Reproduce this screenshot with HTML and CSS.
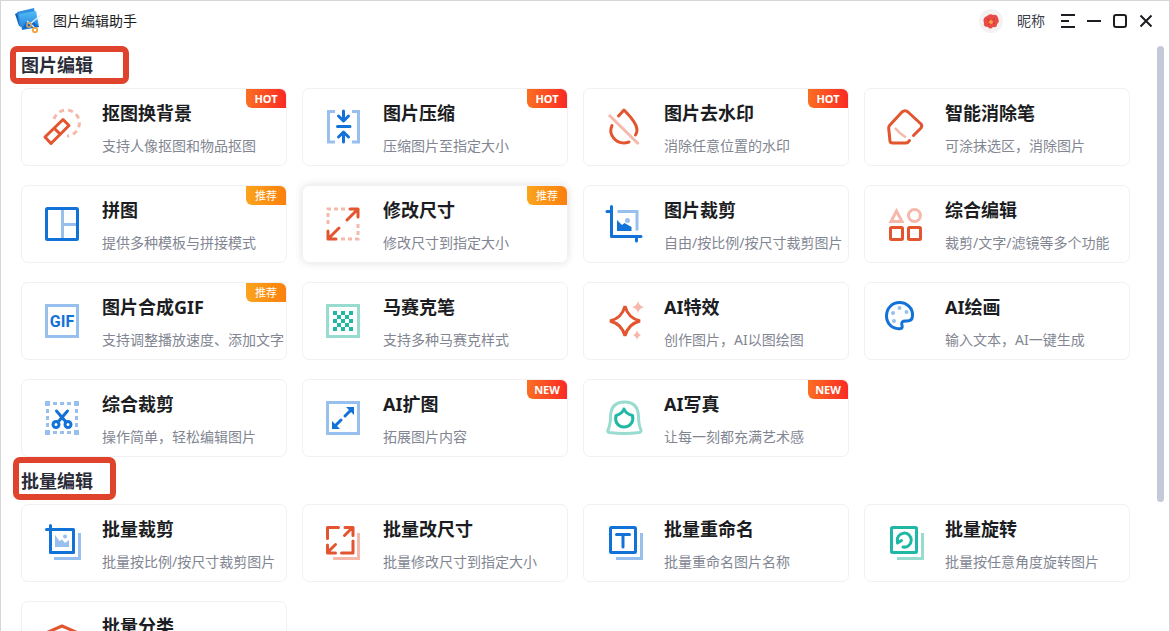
FILE: index.html
```html
<!DOCTYPE html>
<html lang="zh-CN">
<head>
  <meta charset="UTF-8">
  <meta name="viewport" content="width=device-width, initial-scale=1">
  <title>图片编辑助手</title>
  <link rel="stylesheet" href="styles.css">
</head>
<body>
  <div class="app">
    <header class="titlebar">
      <svg class="logo" viewBox="0 0 28 28" aria-hidden="true">
        <defs>
          <linearGradient id="photo" x1="0" y1="0" x2="0" y2="1">
            <stop offset="0" stop-color="#55bdf5"/>
            <stop offset="1" stop-color="#1c7cdc"/>
          </linearGradient>
        </defs>
        <path fill="#1462b0" d="M1 7 L5 5 L8 18 L5 19z"/>
        <path fill="#2f8fe0" d="M3 5 L20 1 L23 17 L6 20z"/>
        <path fill="url(#photo)" d="M5 7 L22 4 L25 20 L8 23z"/>
        <path fill="#1268c8" d="M8 22 L12 15 L16 18 L20 15 L25 20z"/>
        <path stroke="#d9efff" stroke-width="1.5" d="M27 8 L16 17 M13 14 L20 20"/>
        <circle cx="15" cy="18" r="2.2" fill="none" stroke="#d9a35a" stroke-width="1.5"/>
        <circle cx="21" cy="23" r="2.2" fill="none" stroke="#f2a23c" stroke-width="1.8"/>
      </svg>
      <h1 class="app-name">图片编辑助手</h1>
      <a class="user" href="#">
        <svg class="avatar" viewBox="0 0 24 24" aria-hidden="true">
          <circle cx="12" cy="12" r="12" fill="#f3f1f1"/>
          <path fill="#ea4a45" d="M8 7 Q11 4 14 6 Q18 5 19 9 Q21 13 18 15 Q18 19 14 18 Q11 21 9 18 Q4 18 5 14 Q3 9 8 7z"/>
          <path fill="none" stroke="#c92f3a" d="M8 10 L11 12 M16 9 L13 12 M9 16 L11 14 M16 15 L13 13"/>
          <circle cx="12" cy="13" r="2" fill="#f7a13c"/>
        </svg>
        <span>昵称</span>
      </a>
      <div class="window-buttons">
        <button type="button" aria-label="菜单"><svg viewBox="0 0 14 14"><path d="M0 1H14M0 7H8M0 13H14"/></svg></button>
        <button type="button" aria-label="最小化"><svg viewBox="0 0 14 14"><path d="M0 7H14"/></svg></button>
        <button type="button" aria-label="最大化"><svg viewBox="0 0 14 14"><rect x="1" y="1" width="12" height="12" rx="2"/></svg></button>
        <button type="button" aria-label="关闭"><svg viewBox="0 0 14 14"><path d="M1.5 1.5L12.5 12.5M12.5 1.5L1.5 12.5"/></svg></button>
      </div>
    </header>

    <main class="main">
      <div class="tools">
        <section>
          <h2 class="section-title">图片编辑<span class="mark mark-edit"></span></h2>
          <div class="grid">
            <a class="card" href="#">
              <svg class="icon red" viewBox="0 0 40 40"><path class="light" stroke-dasharray="5 4" d="M12 12A13 13 0 1 1 25 29"/><path d="M3 30L21 12.5L27 18.5L9 36.5zM12.5 21.5L18 27"/></svg>
              <div><h3>抠图换背景</h3><p>支持人像抠图和物品抠图</p></div>
              <span class="badge hot">HOT</span>
            </a>
            <a class="card" href="#">
              <svg class="icon blue" viewBox="0 0 40 40"><path class="light" d="M12 4.5H5.5V35H12M29 4.5H35.5V35H29"/><path d="M14.5 19.5H27M20.5 4V13M15.5 9L20.5 14L25.5 9M20.5 35V26M15.5 30L20.5 25L25.5 30"/></svg>
              <div><h3>图片压缩</h3><p>压缩图片至指定大小</p></div>
              <span class="badge hot">HOT</span>
            </a>
            <a class="card" href="#">
              <svg class="icon red" viewBox="0 0 40 40"><path d="M14.5 9L20 3C26 9 33 17 33 23C33 25 32.5 26.5 31.5 28M8 18.5C4 27 11 36 20 36C22 36 23.5 35.5 25 35"/><path class="light" d="M5 8L34.5 37"/></svg>
              <div><h3>图片去水印</h3><p>消除任意位置的水印</p></div>
              <span class="badge hot">HOT</span>
            </a>
            <a class="card" href="#">
              <svg class="icon red" viewBox="0 0 40 40"><path class="light" stroke-width="2.5" d="M10 21Q15 27 21 30.5"/><path d="M28.5 28.5L36 21Q37.5 19 36 17L23 5Q20 2.5 17 5L4.5 18.5Q3.5 20 3.7 21.5L5 34Q5.3 36 7.5 36H21Q23 36 24.5 33.5"/></svg>
              <div><h3>智能消除笔</h3><p>可涂抹选区，消除图片</p></div>
            </a>
            <a class="card" href="#">
              <svg class="icon blue" viewBox="0 0 40 40"><path class="light" d="M20.5 5V35M20.5 20.5H35"/><rect x="4.5" y="4.5" width="31" height="31" rx="1"/></svg>
              <div><h3>拼图</h3><p>提供多种模板与拼接模式</p></div>
              <span class="badge tip">推荐</span>
            </a>
            <a class="card active" href="#">
              <svg class="icon red" viewBox="0 0 40 40"><path class="light" stroke-dasharray="4 3" d="M22 5H5V22M18 35H35V18"/><path d="M24 16L35 5M27 5H35V13M16 24L5 35M5 27V35H13"/></svg>
              <div><h3>修改尺寸</h3><p>修改尺寸到指定大小</p></div>
              <span class="badge tip">推荐</span>
            </a>
            <a class="card" href="#">
              <svg class="icon blue" viewBox="0 0 40 40"><path class="light" d="M13.5 7.5H33V26.5"/><path d="M7.5 2.5V32.5H37M3 7.5H7M32.5 33V37"/><path class="solid" d="M13 16L18 21L20.5 19L27.5 23V27H13z"/><circle class="solid-light" cx="23.5" cy="16.5" r="2.5"/></svg>
              <div><h3>图片裁剪</h3><p>自由/按比例/按尺寸裁剪图片</p></div>
            </a>
            <a class="card" href="#">
              <svg class="icon red" viewBox="0 0 40 40"><path class="light" d="M11.5 7L6 17.5H17z"/><circle class="light" cx="29.5" cy="11.5" r="6"/><rect x="5.5" y="23.5" width="12" height="12" rx="1"/><rect x="23.5" y="23.5" width="12" height="12" rx="1"/></svg>
              <div><h3>综合编辑</h3><p>裁剪/文字/滤镜等多个功能</p></div>
            </a>
            <a class="card" href="#">
              <svg class="icon blue" viewBox="0 0 40 40"><rect class="light" x="4.5" y="4.5" width="31" height="31"/><text x="20" y="26" text-anchor="middle">GIF</text></svg>
              <div><h3>图片合成GIF</h3><p>支持调整播放速度、添加文字</p></div>
              <span class="badge tip">推荐</span>
            </a>
            <a class="card" href="#">
              <svg class="icon green" viewBox="0 0 40 40"><rect class="light" x="4.5" y="4.5" width="31" height="31"/><path class="solid" d="M10 10h4v4h-4zM18 10h4v4h-4zM26 10h4v4h-4zM14 14h4v4h-4zM22 14h4v4h-4zM10 18h4v4h-4zM18 18h4v4h-4zM26 18h4v4h-4zM14 22h4v4h-4zM22 22h4v4h-4zM10 26h4v4h-4zM18 26h4v4h-4zM26 26h4v4h-4z"/></svg>
              <div><h3>马赛克笔</h3><p>支持多种马赛克样式</p></div>
            </a>
            <a class="card" href="#">
              <svg class="icon red" viewBox="0 0 40 40"><path class="star" d="M21 5Q24 17 36 20Q24 23 21 35Q18 23 6 20Q18 17 21 5z"/><path class="solid-light" d="M34 0Q35 5 40 6Q35 7.5 34 12Q33 7.5 28 6Q33 5 34 0zM33 29Q34 33 37 34Q34 35 33 38.5Q32 35 29 34Q32 33 33 29z"/></svg>
              <div><h3>AI特效</h3><p>创作图片，AI以图绘图</p></div>
            </a>
            <a class="card" href="#">
              <svg class="icon blue" viewBox="0 0 40 40"><path d="M16 27.5C6 29 1.5 21 1.5 15C1.5 7 7.5 1.5 14.5 1.5C22 1.5 28 7.5 27.5 14.5C27.5 18 26 20 22 20C17 19.5 16 21.5 17 24.5C17.500 26 17 27.5 16 27.5z"/><g class="solid-light"><circle cx="14.5" cy="7" r="2"/><circle cx="8" cy="12" r="2"/><circle cx="21.5" cy="11" r="2"/><circle cx="9" cy="20" r="2"/></g></svg>
              <div><h3>AI绘画</h3><p>输入文本，AI一键生成</p></div>
            </a>
            <a class="card" href="#">
              <svg class="icon blue" viewBox="0 0 40 40"><path class="light" stroke-dasharray="4 3" d="M11 5.5H30M11 34.5H30M5.500 11V30M34.5 11V30"/><path class="solid-light" d="M3 3h5v5h-5zM32 3h5v5h-5zM3 32h5v5h-5zM32 32h5v5h-5z"/><path d="M14.5 13L24 24M25.5 13L16 24"/><circle cx="14" cy="26.5" r="3"/><circle cx="26" cy="26.5" r="3"/></svg>
              <div><h3>综合裁剪</h3><p>操作简单，轻松编辑图片</p></div>
            </a>
            <a class="card" href="#">
              <svg class="icon blue" viewBox="0 0 40 40"><rect class="light" x="4.5" y="4.5" width="31" height="31"/><path d="M22 18L28 12M18 22L12 28"/><path class="solid" d="M23 9H31V17zM9 23V31H17z"/></svg>
              <div><h3>AI扩图</h3><p>拓展图片内容</p></div>
              <span class="badge hot">NEW</span>
            </a>
            <a class="card" href="#">
              <svg class="icon green" viewBox="0 0 40 40"><path class="light" d="M6.5 18C7 8 12 4 20.5 4S34 8 34.5 18C34.5 25 35 28 37 32Q37.5 34 35 34.5Q20 36.5 5.500 34.5Q3 34 4 32C6 28 6.500 25 6.5 18z"/><path d="M20 11Q18 16 12 17.5C10.5 24 14 29 20 29S30 24 28.5 17.5Q22 16 20 11z"/></svg>
              <div><h3>AI写真</h3><p>让每一刻都充满艺术感</p></div>
              <span class="badge hot">NEW</span>
            </a>
          </div>
        </section>

        <section>
          <h2 class="section-title">批量编辑<span class="mark mark-batch"></span></h2>
          <div class="grid">
            <a class="card" href="#">
              <svg class="icon blue" viewBox="0 0 40 40"><path class="light" d="M37.5 10V35.5H12"/><path d="M8.5 2.5V29.5H31.5V6.5H4.5"/><path class="solid-light" d="M13 12L17.5 18L20 16.5L23 20L27 17V24H13z"/><circle class="solid-light" cx="23" cy="13.5" r="2"/></svg>
              <div><h3>批量裁剪</h3><p>批量按比例/按尺寸裁剪图片</p></div>
            </a>
            <a class="card" href="#">
              <svg class="icon red" viewBox="0 0 40 40"><path class="light" d="M35.5 10V35.5H10"/><path d="M4.5 15.5V4.5H15.5M30 18V30H18.5M21.5 12.5L29.5 4.5M22 4.5H30V12.5M12.5 21.5L4.5 29.5M4.5 22V30H12.5"/></svg>
              <div><h3>批量改尺寸</h3><p>批量修改尺寸到指定大小</p></div>
            </a>
            <a class="card" href="#">
              <svg class="icon blue" viewBox="0 0 40 40"><path class="light" d="M37.5 10V35.5H12"/><rect x="6.5" y="4.5" width="25" height="25" rx="1"/><path d="M12.5 11.5H25.5M19 12V24"/></svg>
              <div><h3>批量重命名</h3><p>批量重命名图片名称</p></div>
            </a>
            <a class="card" href="#">
              <svg class="icon green" viewBox="0 0 40 40"><path class="light" d="M37.5 10V35.5H12"/><rect x="6.5" y="4.5" width="25" height="25" rx="1"/><path d="M18 24A7 7 0 1 0 12.5 19M12.5 15V20L16.5 17.5"/></svg>
              <div><h3>批量旋转</h3><p>批量按任意角度旋转图片</p></div>
            </a>
            <a class="card" href="#">
              <svg class="icon red" viewBox="0 0 40 40"><path d="M20 6L35 12.5L20 19L5 12.5zM5 20L20 27L35 20M5 27L20 34L35 27"/></svg>
              <div><h3>批量分类</h3></div>
            </a>
          </div>
        </section>
      </div>
      <div class="scrollbar"><div class="thumb"></div></div>
    </main>
  </div>
</body>
</html>
```
FILE: styles.css
```css
* {
  box-sizing: border-box;
}
body {
  margin: 0;
  font-family: "Noto Sans", "Noto Sans CJK SC", sans-serif;
  background: #fff;
  color: #1b1d22;
}
a {
  color: inherit;
  text-decoration: none;
}
h1, h2, h3, p {
  margin: 0;
}
.app {
  display: flex;
  flex-direction: column;
  height: 100vh;
  overflow: hidden;
  border: 1px solid #d6d6d8;
  border-bottom: 0;
}

/* title bar */
.titlebar {
  display: flex;
  align-items: center;
  flex: none;
  height: 40px;
  padding: 0 16px 0 13px;
}
.logo {
  width: 28px;
  height: 28px;
  margin-right: 11px;
}
.app-name {
  font-size: 14px;
  font-weight: 400;
  line-height: 20px;
}
.user {
  display: flex;
  align-items: center;
  gap: 14px;
  margin-left: auto;
  margin-right: 16px;
  font-size: 14px;
  line-height: 20px;
  color: #3c3f4c;
}
.avatar {
  width: 24px;
  height: 24px;
}
.window-buttons {
  display: flex;
  gap: 12px;
}
.window-buttons button {
  width: 14px;
  height: 14px;
  padding: 0;
  border: 0;
  background: none;
  cursor: pointer;
}
.window-buttons svg {
  display: block;
  fill: none;
  stroke: #1b1d22;
  stroke-width: 2;
}

/* content */
.main {
  display: flex;
  flex: 1;
  min-height: 0;
}
.tools {
  flex: 1;
  overflow: hidden;
  padding: 0 27px 20px 20px;
}
.section-title {
  position: relative;
  height: 47px;
  font-size: 18px;
  line-height: 49px;
  color: #2a2d38;
}
.mark {
  position: absolute;
  border: 6px solid #df432c;
  border-radius: 7px;
}
.mark-edit {
  left: -11px;
  top: 5px;
  width: 119px;
  height: 38px;
}
.mark-batch {
  left: -8px;
  top: 0;
  width: 103px;
  height: 43px;
}
.grid {
  display: grid;
  grid-template-columns: repeat(4, 1fr);
  gap: 19px 15px;
}
.card {
  position: relative;
  display: flex;
  gap: 20px;
  height: 78px;
  padding: 12px 0 0 20px;
  border: 1px solid #f1f1f3;
  border-radius: 7px;
  white-space: nowrap;
}
.card:hover,
.card.active {
  box-shadow: 0 0 8px rgba(0, 0, 0, 0.12);
}
.card h3 {
  font-size: 18px;
  line-height: 24px;
}
.card p {
  margin-top: 11px;
  font-size: 14px;
  line-height: 20px;
  color: #828692;
}
.badge {
  position: absolute;
  top: 0;
  right: 0;
  width: 40px;
  border-radius: 0 6px 0 6px;
  color: #fff;
  font-size: 11px;
  line-height: 19px;
  text-align: center;
}
.hot {
  font-weight: 700;
  background: linear-gradient(90deg, #fb6f22, #fa2a24);
}
.tip {
  background: linear-gradient(90deg, #fba41c, #fb800e);
}

/* icons */
.icon {
  flex: none;
  width: 40px;
  height: 40px;
  margin-top: 6px;
  fill: none;
  stroke: currentColor;
  stroke-width: 3;
  stroke-linecap: round;
  stroke-linejoin: round;
}
.icon text {
  font-family: Roboto, sans-serif;
  font-size: 16px;
  font-weight: 700;
  fill: currentColor;
  stroke: none;
}
.icon .light {
  stroke-linecap: butt;
  stroke-linejoin: miter;
}
.icon .star {
  stroke-linejoin: miter;
}
.icon .solid {
  fill: currentColor;
  stroke: none;
}
.icon .solid-light {
  stroke: none;
}
.red {
  color: #e2552f;
}
.red .light {
  stroke: #f5b9ab;
}
.red .solid-light {
  fill: #f5b9ab;
}
.blue {
  color: #1372d8;
}
.blue .light {
  stroke: #98c0ee;
}
.blue .solid-light {
  fill: #98c0ee;
}
.green {
  color: #1fb8a4;
}
.green .light {
  stroke: #98dcd0;
}

/* scrollbar */
.scrollbar {
  width: 7px;
  margin: 5px 5px 0 0;
}
.thumb {
  height: 78%;
  border-radius: 4px;
  background: #c5c8d8;
}
```
